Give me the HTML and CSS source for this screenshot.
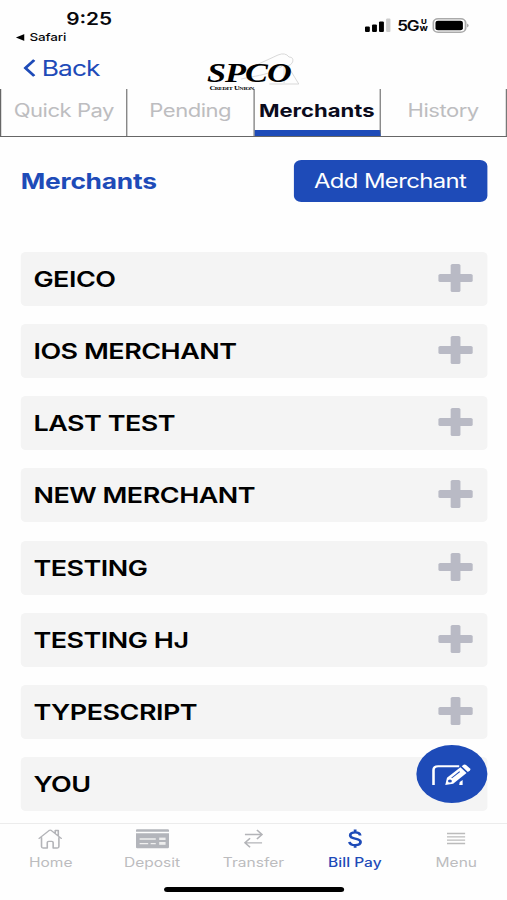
FILE: index.html
```html
<!DOCTYPE html>
<html lang="en">
<head>
<meta charset="UTF-8">
<meta name="viewport" content="width=device-width, initial-scale=1.0">
<title>Bill Pay - Merchants</title>
<link rel="stylesheet" href="styles.css">
</head>
<body>

<div class="phone">
  <div class="status-bar">
    <div class="status-left">
      <div class="time">9:25</div>
      <div class="return-app">
        <svg width="7" height="7" viewBox="0 0 7 7"><path d="M0 3.5 7 0v7z"/></svg>
        <span>Safari</span>
      </div>
    </div>
    <div class="status-right">
      <svg class="signal" width="21" height="15" viewBox="0 0 21 15">
        <rect x="0" y="8.5" width="4" height="5.5" rx="1"/>
        <rect x="5.8" y="6.5" width="4" height="7.5" rx="1"/>
        <rect x="11.5" y="3.5" width="4" height="10.5" rx="1"/>
        <rect x="17.3" y="0.5" width="3.7" height="13.5" rx="1" fill="#ccc"/>
      </svg>
      <span class="network">5G</span>
      <span class="uw"><span>U</span><span>W</span></span>
      <svg class="battery" width="31" height="15" viewBox="0 0 31 15">
        <rect x="0.8" y="0.8" width="26.4" height="13.4" rx="4" fill="#fff" stroke="#aaa" stroke-width="1.5"/>
        <rect x="2.6" y="2.7" width="22.4" height="9.6" rx="2"/>
        <path d="M28.6 5.5q2 2 0 4z" fill="#888"/>
      </svg>
    </div>
  </div>

  <header class="header">
    <a class="back" href="#">
      <svg width="10" height="18" viewBox="0 0 10 18"><path d="M9 1 1.8 9 9 17" fill="none" stroke="#1e4bb8" stroke-width="2.6"/></svg>
      <span>Back</span>
    </a>
    <div class="logo">
      <svg class="logo-mark" width="50" height="32" viewBox="0 0 50 32">
        <path d="M1 26C12 23 21 22 27 18C31 14 34 11 36 12L36 30M1 19 31 2Q37-1 40 4Q44 4 43 9Q42 12 39 13L48 31H24M39 13Q35 11 32 15" fill="none" stroke="#d4d4d4" stroke-width="0.8"/>
      </svg>
      <div class="logo-name">SPCO</div>
      <div class="logo-sub">Credit Union</div>
    </div>
  </header>

  <nav class="tabs">
    <a class="tab" href="#">Quick Pay</a>
    <a class="tab" href="#">Pending</a>
    <a class="tab active" href="#">Merchants</a>
    <a class="tab" href="#">History</a>
  </nav>

  <main class="content">
    <div class="title-row">
      <h1>Merchants</h1>
      <button class="add-button">Add Merchant</button>
    </div>

    <ul class="merchants">
      <li><span>GEICO</span><i class="plus"></i></li>
      <li><span>IOS MERCHANT</span><i class="plus"></i></li>
      <li><span>LAST TEST</span><i class="plus"></i></li>
      <li><span>NEW MERCHANT</span><i class="plus"></i></li>
      <li><span>TESTING</span><i class="plus"></i></li>
      <li><span>TESTING HJ</span><i class="plus"></i></li>
      <li><span>TYPESCRIPT</span><i class="plus"></i></li>
      <li><span>YOU</span></li>
    </ul>
  </main>

  <button class="edit-button" aria-label="Edit">
    <svg width="58" height="58" viewBox="0 0 58 58">
      <path d="M14 40V25Q14 21.2 17.8 21.2H35" fill="none" stroke="#fff" stroke-width="2.1"/>
      <path d="M23.6 40 25 32.8 36 22.2 41 28 30 38.8z" fill="#fff"/>
      <path d="M37 21.3 38.6 19.8Q39.6 19 40.6 20L43.8 23.6Q44.7 24.7 43.7 25.6L42 27.1z" fill="#fff"/>
      <path d="M28.8 33 35.4 26.7" stroke="#1e4bb8" stroke-width="0.9"/>
      <circle cx="27.4" cy="36" r="1.6" fill="#1e4bb8"/>
      <path d="M35 40 35.4 37 37.8 35V40z" fill="#fff"/>
    </svg>
  </button>

  <footer class="bottom-nav">
    <a class="nav-item" href="#">
      <svg width="20" height="20" viewBox="0 0 20 20" fill="none" stroke="#b3b4b8" stroke-width="1.3" stroke-linejoin="round" stroke-linecap="round">
        <path d="M2.9 8.6V17.5Q2.9 19 4.2 19H7.6V13.5Q7.6 12.4 8.7 12.4H11.3Q12.4 12.4 12.4 13.5V19H15.8Q17.1 19 17.1 17.5V8.6M1 9.4 9 1.6Q10 .7 11 1.6L19 9.4M14.1 4.3V1.5H16.6V6.8"/>
      </svg>
      <span>Home</span>
    </a>
    <a class="nav-item" href="#">
      <svg width="27" height="20" viewBox="0 0 27 20">
        <path d="M0 1.2Q0 .2 1 .2H26Q27 .2 27 1.2V2.7H0zM0 4.2H27V18Q27 19.3 26 19.3H1Q0 19.3 0 18z" fill="#b3b5bb"/>
        <path d="M3 10H16.2M3 14.6H10M12 14.6H16.2" stroke="#f0f0f0" stroke-width="1.3"/>
        <rect x="19" y="8.6" width="5.2" height="2.4" fill="#eee"/>
        <rect x="19" y="13" width="5.2" height="2.8" fill="#eee"/>
      </svg>
      <span>Deposit</span>
    </a>
    <a class="nav-item" href="#">
      <svg width="16" height="20" viewBox="0 0 16 20" fill="none" stroke="#b3b4b8" stroke-width="1.3">
        <path d="M1 5.5H15M10.8 1 15 5.5 10.8 10M15 13.8H1M5.2 9.3 1 13.8l4.2 4.5"/>
      </svg>
      <span>Transfer</span>
    </a>
    <a class="nav-item active" href="#">
      <svg width="12" height="20" viewBox="0 0 12 20" fill="none" stroke="#1e4bb8" stroke-width="2.3">
        <path d="M10.1 6.5Q9.8 3.4 6 3.4Q2 3.4 2 6.3Q2 8.9 6 9.6Q10.4 10.5 10.4 13.1Q10.4 16.2 6 16.2Q1.8 16.2 1.4 12.9M6 .6V4M6 16V18.7"/>
      </svg>
      <span>Bill Pay</span>
    </a>
    <a class="nav-item" href="#">
      <svg width="15" height="20" viewBox="0 0 15 20" stroke="#bbb" stroke-width="1.3">
        <path d="M0 4.5H15M0 7.9H15M0 11.2H15M0 14.5H15"/>
      </svg>
      <span>Menu</span>
    </a>
  </footer>
  <div class="home-indicator"></div>
</div>

</body>
</html>
```
FILE: styles.css
```css
body {
  font-family: Inter, sans-serif;
  margin: 0;
  background: #fefefe;
  color: #08080c;
  overflow: hidden;
}

/* 414pt layout stretched to the window width */
.phone {
  position: relative;
  display: flex;
  flex-direction: column;
  width: 414px;
  height: 900px;
  transform: scaleX(1.2246);
  transform-origin: 0 0;
}

a {
  color: inherit;
  text-decoration: none;
}

button {
  font-family: inherit;
  border: 0;
  padding: 0;
}

svg {
  display: block;
}

.status-bar {
  display: flex;
  justify-content: space-between;
  height: 52px;
}

.time {
  margin: 9px 0 0 54px;
  font-size: 17px;
  font-weight: 600;
  line-height: 20px;
}

.return-app {
  display: flex;
  align-items: center;
  gap: 4px;
  margin: 1px 0 0 13px;
  font-size: 11px;
  font-weight: 500;
  line-height: 14px;
  letter-spacing: -0.1px;
}

.status-right {
  display: flex;
  align-items: center;
  height: 15px;
  margin: 18px 30.5px 0 0;
}

.network {
  margin-left: 5.5px;
  font-size: 14px;
  font-weight: 600;
  letter-spacing: -1px;
}

.uw {
  display: flex;
  flex-direction: column;
  align-items: center;
  margin: 0 3px 0 1px;
  font-size: 6.5px;
  font-weight: 800;
  line-height: 7px;
}

.header {
  display: flex;
  height: 37px;
}

.back {
  display: flex;
  align-items: center;
  gap: 5px;
  width: 150px;
  height: 32px;
  padding-left: 19px;
  font-size: 21.5px;
  letter-spacing: -0.7px;
  color: #1e4bb8;
}

.logo {
  position: relative;
  color: #000;
}

.logo-mark {
  position: absolute;
  left: 27px;
  top: 1px;
}

.logo-name {
  position: relative;
  margin-top: 5px;
  font-family: "Liberation Serif", serif;
  font-size: 28px;
  font-weight: 700;
  font-style: italic;
  line-height: 32px;
  letter-spacing: -0.8px;
}

.logo-sub {
  position: relative;
  margin-top: -4px;
  padding-left: 2px;
  font-family: "Liberation Serif", serif;
  font-size: 6.5px;
  font-weight: 700;
  font-variant: small-caps;
  line-height: 6px;
  letter-spacing: -0.3px;
}

.tabs {
  display: flex;
  height: 48px;
  box-sizing: border-box;
  border-bottom: 1px solid #666;
  border-left: 1px solid #666;
}

.tab {
  flex: 1;
  box-sizing: border-box;
  height: 47px;
  border-right: 1px solid #777;
  font-size: 18px;
  line-height: 43px;
  text-align: center;
  white-space: nowrap;
  letter-spacing: -0.4px;
  color: #bdbdc0;
}

.tab.active {
  border-bottom: 6px solid #1e4bb8;
  font-weight: 700;
  letter-spacing: 0;
  color: #0b0b1c;
}

.content {
  padding: 23px 16.5px 0 17px;
}

.title-row {
  display: flex;
  justify-content: space-between;
  align-items: center;
}

h1 {
  margin: 0;
  font-size: 21.5px;
  font-weight: 700;
  letter-spacing: -0.2px;
  color: #1e4bb8;
}

.add-button {
  width: 158px;
  height: 42px;
  border-radius: 6px;
  background: #1e4bb8;
  font-size: 19.5px;
  letter-spacing: -0.5px;
  color: #fff;
}

.merchants {
  display: flex;
  flex-direction: column;
  gap: 18.15px;
  list-style: none;
  margin: 50px 0 0;
  padding: 0;
}

.merchants li {
  display: flex;
  justify-content: space-between;
  align-items: center;
  box-sizing: border-box;
  height: 54px;
  padding: 0 11.3px 0 10.3px;
  border-radius: 4px;
  background: #f4f4f4;
  font-size: 22px;
  font-weight: 600;
  letter-spacing: -0.4px;
  color: #000;
}

.plus {
  display: grid;
  place-items: center;
  width: 28px;
  height: 28px;
  margin-top: -2px;
}

.plus::before,
.plus::after {
  content: "";
  grid-area: 1 / 1;
  width: 28px;
  height: 8px;
  border-radius: 1.5px;
  background: #b9bac5;
}

.plus::after {
  width: 8px;
  height: 28px;
}

.edit-button {
  position: absolute;
  left: 339.7px;
  top: 745px;
  width: 58px;
  height: 58px;
  border-radius: 50%;
  background: #1e4bb8;
}

.bottom-nav {
  position: absolute;
  left: 0;
  right: 0;
  top: 823px;
  display: flex;
  height: 63px;
  box-sizing: border-box;
  border-top: 1px solid #ececec;
  background: #fefefe;
}

.nav-item {
  flex: 1;
  display: flex;
  flex-direction: column;
  align-items: center;
  gap: 5px;
  padding-top: 5px;
  font-size: 12.7px;
  line-height: 18px;
  color: #bcbcbe;
}

.nav-item.active {
  font-weight: 500;
  color: #1e4bb8;
}

.home-indicator {
  position: absolute;
  left: 133.5px;
  top: 887px;
  width: 147.5px;
  height: 5px;
  border-radius: 3px;
  background: #000;
}
```
